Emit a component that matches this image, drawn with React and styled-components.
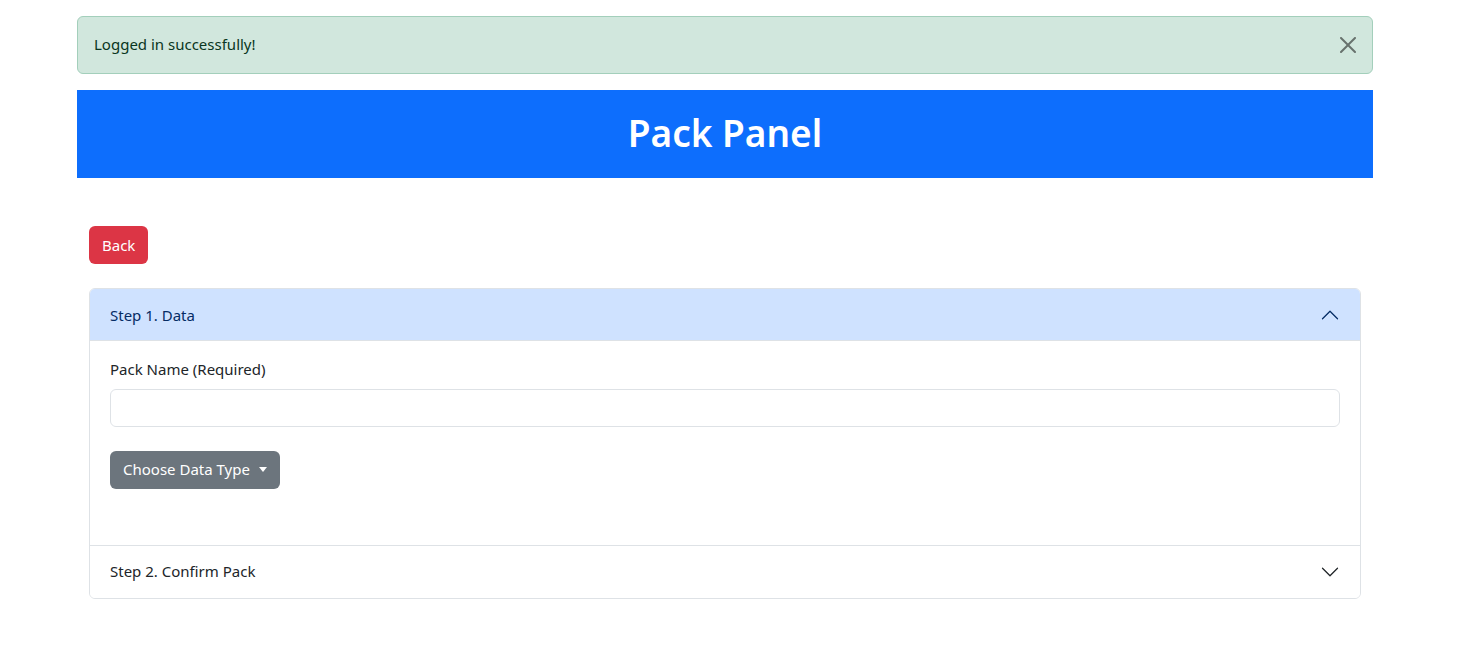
import React, { useState } from "react";
import styled, { createGlobalStyle } from "styled-components";

const GlobalStyle = createGlobalStyle`
  * { box-sizing: border-box; }
  body {
    margin: 0;
    background: #fff;
    color: #212529;
    font-family: "Noto Sans", "Open Sans", sans-serif;
    font-size: 15px;
    line-height: 1.5;
  }
`;

const Page = styled.div`
  width: 1296px;
  margin-left: 77px;
  padding-top: 16px;
`;

const Alert = styled.div`
  position: relative;
  background: #d1e7dd;
  border: 1px solid #a3cfbb;
  border-radius: 6px;
  color: #0a3622;
  padding: 16px 48px 16px 16px;
  margin-bottom: 16px;
  height: 58px;
`;

const CloseButton = styled.button`
  position: absolute;
  top: 0;
  right: 0;
  border: none;
  background: transparent;
  padding: 20px 16px;
  opacity: 0.5;
  cursor: pointer;
  display: flex;
`;

const Header = styled.header`
  background: #0d6efd;
  height: 88px;
  display: flex;
  align-items: center;
  justify-content: center;
`;

const Title = styled.h1`
  margin: 0 0 2px;
  color: #fff;
  font-size: 37px;
  font-weight: 600;
  line-height: 1.2;
`;

const Content = styled.div`
  padding: 48px 12px 0;
`;

const Button = styled.button`
  display: inline-flex;
  align-items: center;
  height: 38px;
  padding: 0 13px;
  border: none;
  border-radius: 6px;
  background: ${(p) => p.$bg};
  color: #fff;
  font: inherit;
  cursor: pointer;
`;

const Caret = styled.span`
  display: inline-block;
  margin-left: 9px;
  border-top: 5px solid #fff;
  border-left: 4.5px solid transparent;
  border-right: 4.5px solid transparent;
`;

const Accordion = styled.div`
  margin-top: 24px;
  border: 1px solid #dee2e6;
  border-radius: 6px;
  overflow: hidden;
`;

const Item = styled.div`
  & + & {
    border-top: 1px solid #dee2e6;
  }
`;

const ItemHeader = styled.button`
  width: 100%;
  height: 52px;
  display: flex;
  align-items: center;
  justify-content: space-between;
  padding: 0 20px;
  border: none;
  background: ${(p) => (p.$open ? "#cfe2ff" : "#fff")};
  color: ${(p) => (p.$open ? "#052c65" : "#212529")};
  box-shadow: ${(p) => (p.$open ? "inset 0 -1px 0 #dee2e6" : "none")};
  font: inherit;
  text-align: left;
  cursor: pointer;
`;

const Chevron = styled.svg`
  width: 20px;
  height: 20px;
  transform: ${(p) => (p.$open ? "rotate(180deg)" : "none")};
`;

const ItemBody = styled.div`
  padding: 17px 20px 56px;
`;

const Label = styled.label`
  display: block;
  margin-bottom: 8px;
`;

const Input = styled.input`
  display: block;
  width: 100%;
  height: 38px;
  padding: 6px 12px;
  border: 1px solid #dee2e6;
  border-radius: 6px;
  font: inherit;
  margin-bottom: 24px;
`;

function ChevronIcon({ open }) {
  return (
    <Chevron $open={open} viewBox="0 0 16 16">
      <path
        fill="none"
        stroke={open ? "#052c65" : "#212529"}
        strokeLinecap="round"
        strokeLinejoin="round"
        d="M2 5L8 11L14 5"
      />
    </Chevron>
  );
}

export default function App() {
  const [open, setOpen] = useState(0);
  const steps = ["Step 1. Data", "Step 2. Confirm Pack"];

  return (
    <Page>
      <GlobalStyle />
      <Alert>
        Logged in successfully!
        <CloseButton aria-label="Close">
          <svg width="16" height="16" viewBox="0 0 16 16">
            <path d="M.293.293a1 1 0 0 1 1.414 0L8 6.586 14.293.293a1 1 0 1 1 1.414 1.414L9.414 8l6.293 6.293a1 1 0 0 1-1.414 1.414L8 9.414l-6.293 6.293a1 1 0 0 1-1.414-1.414L6.586 8 .293 1.707a1 1 0 0 1 0-1.414z" />
          </svg>
        </CloseButton>
      </Alert>
      <Header>
        <Title>Pack Panel</Title>
      </Header>
      <Content>
        <Button $bg="#dc3545">Back</Button>
        <Accordion>
          {steps.map((s, i) => (
            <Item key={s}>
              <ItemHeader $open={open === i} onClick={() => setOpen(open === i ? -1 : i)}>
                {s}
                <ChevronIcon open={open === i} />
              </ItemHeader>
              {open === i && i === 0 && (
                <ItemBody>
                  <Label>Pack Name (Required)</Label>
                  <Input type="text" />
                  <Button $bg="#6c757d">
                    Choose Data Type
                    <Caret />
                  </Button>
                </ItemBody>
              )}
            </Item>
          ))}
        </Accordion>
      </Content>
    </Page>
  );
}
